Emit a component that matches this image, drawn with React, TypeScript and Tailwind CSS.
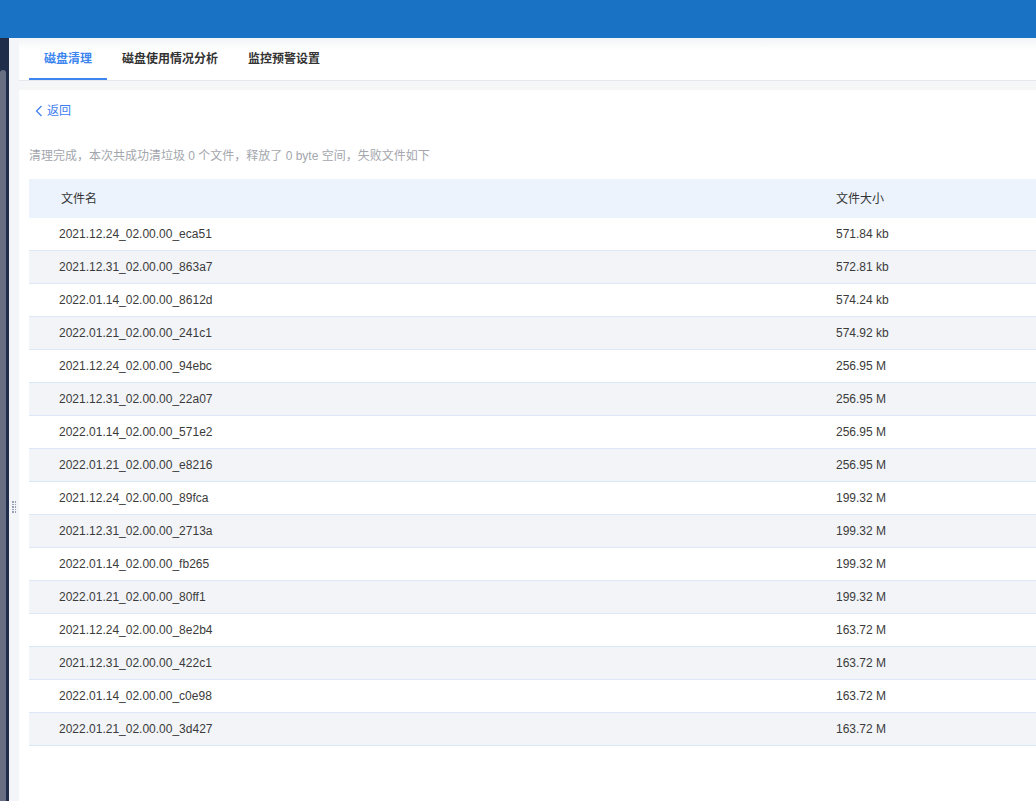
import React from "react";

const rows = [
  { name: "2021.12.24_02.00.00_eca51", size: "571.84 kb" },
  { name: "2021.12.31_02.00.00_863a7", size: "572.81 kb" },
  { name: "2022.01.14_02.00.00_8612d", size: "574.24 kb" },
  { name: "2022.01.21_02.00.00_241c1", size: "574.92 kb" },
  { name: "2021.12.24_02.00.00_94ebc", size: "256.95 M" },
  { name: "2021.12.31_02.00.00_22a07", size: "256.95 M" },
  { name: "2022.01.14_02.00.00_571e2", size: "256.95 M" },
  { name: "2022.01.21_02.00.00_e8216", size: "256.95 M" },
  { name: "2021.12.24_02.00.00_89fca", size: "199.32 M" },
  { name: "2021.12.31_02.00.00_2713a", size: "199.32 M" },
  { name: "2022.01.14_02.00.00_fb265", size: "199.32 M" },
  { name: "2022.01.21_02.00.00_80ff1", size: "199.32 M" },
  { name: "2021.12.24_02.00.00_8e2b4", size: "163.72 M" },
  { name: "2021.12.31_02.00.00_422c1", size: "163.72 M" },
  { name: "2022.01.14_02.00.00_c0e98", size: "163.72 M" },
  { name: "2022.01.21_02.00.00_3d427", size: "163.72 M" },
];

const tabs = ["磁盘清理", "磁盘使用情况分析", "监控预警设置"];

const App: React.FC = () => {
  return (
    <div
      className="h-[801px] w-[1036px] overflow-hidden bg-white text-[12px] text-[#333]"
      style={{ fontFamily: '"Liberation Sans", "Noto Sans CJK SC", sans-serif' }}
    >
      {/* Top bar */}
      <div className="h-[38px] bg-[#1a72c4]" />

      <div className="flex h-[763px]">
        {/* Left rail */}
        <div className="flex w-[9px] flex-col bg-[#1f2d4a]">
          <div className="h-[32px]" />
          <div className="w-[6px] flex-1 rounded-t-[3px] bg-[#686f82]" />
        </div>

        {/* Gutter with drag handle */}
        <div className="flex w-[10px] flex-col items-center bg-[#f3f5f9] pt-[463px]">
          <div className="grid grid-cols-2 gap-x-[1px] gap-y-[1px]">
            {Array.from({ length: 10 }).map((_, i) => (
              <span key={i} className="h-[1.5px] w-[1.5px] bg-[#9aa0b4]" />
            ))}
          </div>
        </div>

        {/* Main */}
        <div className="flex flex-1 flex-col bg-[#f5f6f8]">
          {/* Tabs */}
          <div className="flex h-[43px] border-b border-[#e4e7ed] bg-white bg-gradient-to-b from-[#f3f4f6] to-white to-[12px] pl-[10px]">
            {tabs.map((t, i) => (
              <div
                key={t}
                className={`flex items-center px-[15px] pt-[2px] text-[12px] font-semibold ${
                  i === 0
                    ? "border-b-2 border-[#3d86ef] text-[#3d86ef]"
                    : "border-b-2 border-transparent text-[#333]"
                }`}
              >
                {t}
              </div>
            ))}
          </div>

          {/* Content panel */}
          <div className="mt-[9px] flex-1 bg-white pl-[10px]">
            <div className="flex h-[28px] items-end gap-[4px] pl-[6px] text-[#3d7ef0]">
              <svg width="8" height="12" viewBox="0 0 8 12" className="mb-[1px]">
                <path d="M6.5 1 L1.5 6 L6.5 11" fill="none" stroke="#3d7ef0" strokeWidth="1.2" />
              </svg>
              <span className="text-[12px] leading-[14px]">返回</span>
            </div>

            <div className="mt-[29px] text-[12px] text-[#a3a6ad]">
              清理完成，本次共成功清垃圾 0 个文件，释放了 0 byte 空间，失败文件如下
            </div>

            {/* Table */}
            <div className="mt-[14px]">
              <div className="flex h-[39px] items-center bg-[#ecf3fd] text-[#333]">
                <div className="w-[807px] pl-[32px]">文件名</div>
                <div>文件大小</div>
              </div>
              {rows.map((r, i) => (
                <div
                  key={r.name}
                  className={`flex h-[33px] items-center border-b border-[#dde8f6] ${
                    i % 2 === 1 ? "bg-[#f2f4f8]" : "bg-white"
                  }`}
                >
                  <div className="w-[807px] pl-[30px] text-[#3b3b3b]">{r.name}</div>
                  <div className="text-[#3b3b3b]">{r.size}</div>
                </div>
              ))}
            </div>
          </div>
        </div>
      </div>
    </div>
  );
};

export default App;
